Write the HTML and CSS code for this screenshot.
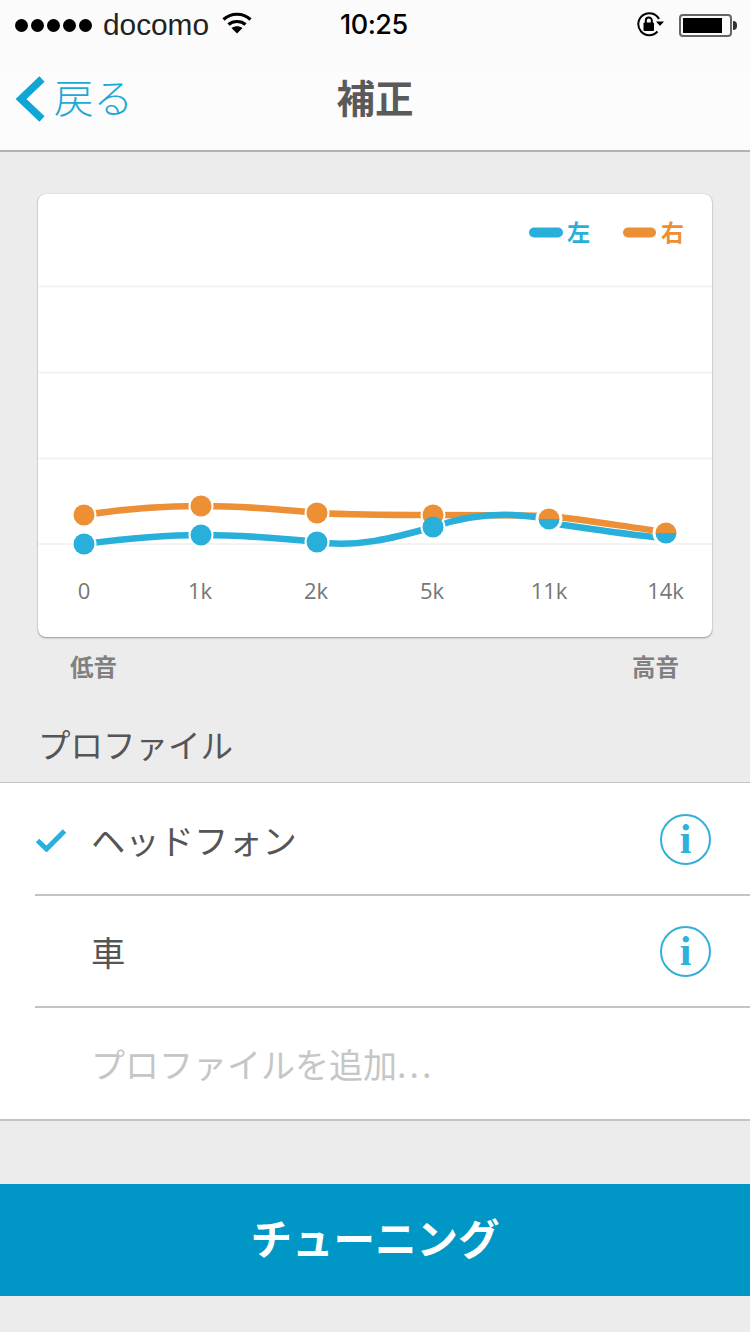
FILE: index.html
```html
<!DOCTYPE html>
<html lang="ja">
<head>
<meta charset="utf-8">
<title>補正</title>
<link rel="stylesheet" href="styles.css">
</head>
<body>
<header class="top">
  <div class="status">
    <div class="status-left">
      <span class="dots"><i></i><i></i><i></i><i></i><i></i></span>
      <span class="carrier">docomo</span>
      <svg class="wifi" viewBox="0 0 30 24" width="30" height="24"><path d="M1.500 8.500C9 1.500 21 1.500 28.500 8.500" class="w"/><path d="M6.500 13.500C11 9.500 19 9.500 23.500 13.500" class="w"/><path d="M9.500 17L15 22.500L20.500 17C17 14.500 13 14.500 9.500 17Z" class="wf"/></svg>
    </div>
    <span class="time">10:25</span>
    <div class="status-right">
      <svg class="lock" viewBox="0 0 30 26" width="30" height="26"><path d="M21.500 19.500A11 11 0 1 1 23 7" class="lk"/><path d="M20 9.500h8l-4 4.500z" class="lf"/><rect x="7.500" y="10.500" width="10.500" height="8.500" rx="1" class="lf"/><path d="M9.800 11V8.500a3 3 0 0 1 6 0V11" class="lk"/></svg>
      <span class="battery"><span class="battery-fill"></span></span>
      <span class="battery-tip"></span>
    </div>
  </div>
  <nav class="nav">
    <a class="back">
      <svg viewBox="0 0 32 50" width="32" height="50"><path d="M27 5L6 25L27 45" class="chev"/></svg>
      <span>戻る</span>
    </a>
    <h1 class="title">補正</h1>
  </nav>
</header>

<main>
  <section class="card">
    <svg class="chart" viewBox="0 0 674 443" width="674" height="443">
      <g class="grid">
        <path d="M0 92.500H674M0 178.500H674M0 264.500H674M0 350H674"/>
      </g>
      <path class="bar blue" d="M496 38.500H520"/>
      <text x="529" y="47" class="leg tblue">左</text>
      <path class="bar orange" d="M590 38.500H613"/>
      <text x="623" y="47" class="leg torange">右</text>

      <path class="line orange" d="M46 321C85 315 124 312 163 312C202 312 240 315 279 319C318 321 356 321 395 321C434 321 472 321 511 322C550 326 589 333 628 338"/>
      <path class="line blue" d="M46 350C85 345 124 341 163 341C202 341 240 344 279 348C318 354 356 344 395 333C425 323 450 320 475 321C490 322 500 323 511 325"/>
      <path class="line blue" d="M511 329C550 334 589 341 628 344"/>

      <g class="halo">
        <circle cx="46" cy="321" r="12.500"/><circle cx="163" cy="312" r="12.500"/><circle cx="279" cy="319" r="12.500"/><circle cx="395" cy="321" r="12.500"/><circle cx="511" cy="325" r="13.500"/><circle cx="628" cy="339" r="13.500"/>
        <circle cx="46" cy="350" r="12.500"/><circle cx="163" cy="341" r="12.500"/><circle cx="279" cy="348" r="12.500"/><circle cx="395" cy="333" r="12.500"/>
      </g>
      <g class="dot-o">
        <circle cx="46" cy="321" r="10.500"/><circle cx="163" cy="312" r="10.500"/><circle cx="279" cy="319" r="10.500"/><circle cx="395" cy="321" r="10.500"/>
        <path d="M500.500 325a10.500 10.500 0 0 1 21 0z"/><path d="M617.500 339a10.500 10.500 0 0 1 21 0z"/>
      </g>
      <g class="dot-b">
        <circle cx="46" cy="350" r="10.500"/><circle cx="163" cy="341" r="10.500"/><circle cx="279" cy="348" r="10.500"/><circle cx="395" cy="333" r="10.500"/>
        <path d="M500.500 325a10.500 10.500 0 0 0 21 0z"/><path d="M617.500 339a10.500 10.500 0 0 0 21 0z"/>
      </g>
      <g class="ticks">
        <text x="46" y="405">0</text><text x="162" y="405">1k</text><text x="278" y="405">2k</text><text x="394" y="405">5k</text><text x="511" y="405">11k</text><text x="627.500" y="405">14k</text>
      </g>
    </svg>
  </section>
  <div class="range"><span>低音</span><span>高音</span></div>
  <h2 class="section-title">プロファイル</h2>
  <ul class="list">
    <li class="row">
      <svg class="check" viewBox="0 0 32 24" width="32" height="24"><path d="M2.500 12.500L11.500 21L29.500 3"/></svg>
      <span class="label">ヘッドフォン</span>
      <span class="info">i</span>
    </li>
    <li class="row">
      <span class="label">車</span>
      <span class="info">i</span>
    </li>
    <li class="row">
      <span class="label placeholder">プロファイルを追加<span class="more">...</span></span>
    </li>
  </ul>
  <button class="tune">チューニング</button>
</main>
</body>
</html>
```
FILE: styles.css
```css
* { box-sizing: border-box; }
html, body { margin: 0; padding: 0; }
body {
  width: 750px;
  height: 1332px;
  overflow: hidden;
  background: #ececec;
  color: #555;
  font-family: "Noto Sans CJK JP", "Noto Sans", sans-serif;
}
.top { background: #fcfcfc; border-bottom: 2px solid #b2b2b2; height: 152px; }
.status {
  height: 72px;
  background: #fbfbfb;
  position: relative;
  display: flex;
  align-items: center;
  justify-content: space-between;
  padding: 0 13px 22px 15px;
  color: #000;
}
.status-left { display: flex; align-items: center; }
.dots { display: flex; gap: 3px; }
.dots i { display: block; width: 13px; height: 13px; border-radius: 50%; background: #000; }
.carrier { font: 29.800px "Liberation Sans", sans-serif; margin-left: 11px; color: #222; }
.wifi { margin-left: 13px; margin-top: -4px; }
.w { fill: none; stroke: #000; stroke-width: 3.200; }
.wf { fill: #000; }
.time {
  position: absolute;
  left: 340px;
  top: 8px;
  font: 500 27px/34px "Inter", "Liberation Sans", sans-serif;
  letter-spacing: -0.500px;
}
.status-right { display: flex; align-items: center; }
.lock { margin-right: 13px; margin-top: -1px; }
.lk { fill: none; stroke: #000; stroke-width: 2; }
.lf { fill: #000; }
.battery {
  width: 53px;
  height: 23px;
  border: 2px solid #666;
  border-radius: 4px;
  padding: 2px;
  display: block;
}
.battery-fill { display: block; width: 39px; height: 15px; background: #000; }
.battery-tip { width: 4px; height: 9px; background: #333; border-radius: 0 4px 4px 0; margin-left: 1px; }
.nav { height: 78px; position: relative; display: flex; align-items: center; justify-content: center; padding-bottom: 30px; }
.back {
  position: absolute;
  left: 15px;
  top: 2px;
  display: flex;
  align-items: center;
  color: #1ea8d6;
  font-size: 39.500px;
  line-height: 50px;
  font-weight: 300;
}
.back span { margin-left: 7px; margin-top: -6px; }
.chev { fill: none; stroke: #0fa5d4; stroke-width: 7.500; }
.title { margin: 0; font-size: 38.500px; font-weight: 700; color: #5a5a5a; line-height: 50px; }

.card {
  margin: 42px 38px 0;
  width: 674px;
  height: 443px;
  background: #fff;
  border-radius: 8px;
  box-shadow: 0 1px 2px rgba(0,0,0,.35), 0 0 1px rgba(0,0,0,.25);
  overflow: hidden;
}
.chart { display: block; }
.grid path { stroke: #efefef; stroke-width: 1.500; fill: none; }
.bar { fill: none; stroke-width: 10; stroke-linecap: round; }
.line { fill: none; stroke-width: 6.500; }
.blue { stroke: #29b0da; }
.orange { stroke: #ec8f35; }
.leg { font-size: 23px; font-weight: 700; font-family: "Noto Sans CJK JP", sans-serif; }
.tblue { fill: #29b0da; }
.torange { fill: #ec8f35; }
.halo circle { fill: #fff; }
.dot-o { fill: #ec8f35; }
.dot-b { fill: #29b0da; }
.ticks text { font: 22px "Open Sans", sans-serif; fill: #777; text-anchor: middle; }

.range {
  display: flex;
  justify-content: space-between;
  padding: 0 71px 0 70px;
  margin-top: 12px;
  font-size: 23.500px;
  line-height: 34px;
  font-weight: 700;
  color: #808080;
}
.section-title {
  margin: 38px 0 0 38px;
  font-size: 32.500px;
  font-weight: 400;
  line-height: 46px;
  color: #555;
  height: 48px;
}
.list {
  list-style: none;
  margin: 13px 0 0;
  padding: 1px 0 0 35px;
  background: #fff;
  border-top: 1px solid #c4c4c4;
  border-bottom: 2px solid #c4c4c4;
}
.row {
  height: 112px;
  display: flex;
  align-items: center;
  border-bottom: 2px solid #c4c4c4;
  padding-left: 56px;
  padding-right: 39px;
  position: relative;
}
.row:last-child { border-bottom: 0; height: 111px; }
.check { position: absolute; left: 0; top: 44px; }
.check path { fill: none; stroke: #29b0da; stroke-width: 5; }
.label { font-size: 34.300px; color: #555; flex: 1; line-height: 46px; }
.placeholder { font-size: 34px; color: #c6c6c6; }
.more { letter-spacing: 3px; }
.info {
  width: 51px;
  height: 51px;
  border: 2.500px solid #2fb1da;
  border-radius: 50%;
  color: #2fb1da;
  font: 700 42px/46px "Liberation Serif", serif;
  text-align: center;
}
.tune {
  display: block;
  width: 750px;
  height: 112px;
  margin-top: 63px;
  border: 0;
  padding: 0 0 6px;
  background: #0096c6;
  color: #fff;
  font-family: "Noto Sans CJK JP", sans-serif;
  font-size: 41.500px;
  font-weight: 700;
}
```
